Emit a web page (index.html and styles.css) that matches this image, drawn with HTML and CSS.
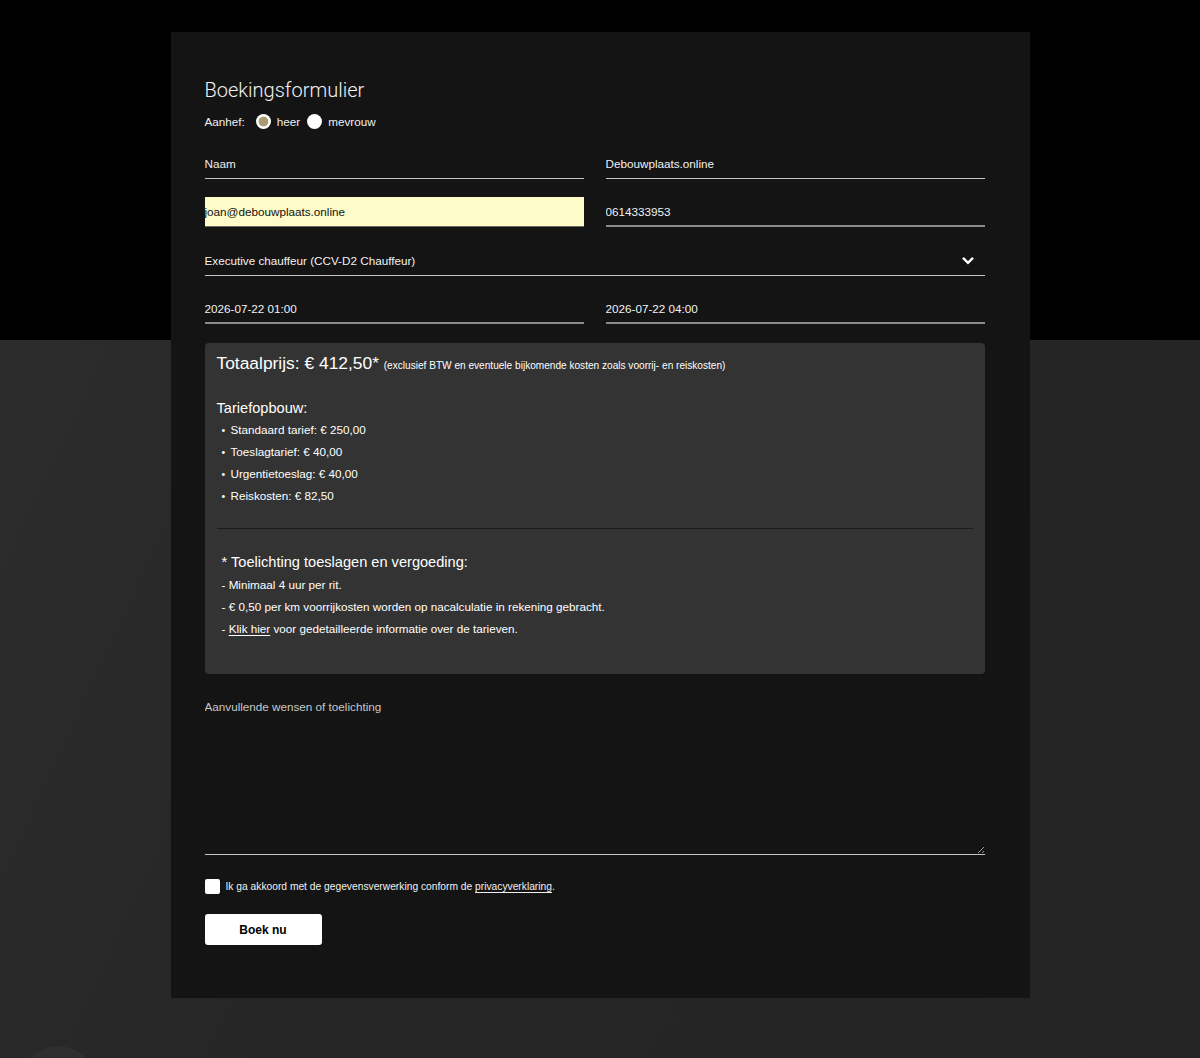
FILE: index.html
```html
<!DOCTYPE html>
<html lang="nl">
<head>
<meta charset="utf-8">
<title>Boekingsformulier</title>
<link rel="stylesheet" href="styles.css">
</head>
<body>
<div class="deco"><div class="deco-circle"></div></div>
<main class="card">
  <h1 class="title">Boekingsformulier</h1>
  <div class="salutation">
    <span class="salutation-label">Aanhef:</span>
    <label class="radio-label"><input type="radio" name="aanhef" class="radio" checked> heer</label>
    <label class="radio-label"><input type="radio" name="aanhef" class="radio"> mevrouw</label>
  </div>
  <div class="fields">
    <input class="field" type="text" placeholder="Naam">
    <input class="field" type="text" value="Debouwplaats.online">
    <input class="field autofill" type="email" value="joan@debouwplaats.online">
    <input class="field thick" type="tel" value="0614333953">
    <div class="select-wrap">
      <select class="field select">
        <option>Executive chauffeur (CCV-D2 Chauffeur)</option>
      </select>
      <svg class="chevron" width="14" height="9" viewBox="0 0 14 9"><path d="M2 1.8 L7 6.8 L12 1.8" fill="none" stroke="#fff" stroke-width="2.4"/></svg>
    </div>
    <input class="field thick" type="text" value="2026-07-22 01:00">
    <input class="field thick" type="text" value="2026-07-22 04:00">
  </div>

  <section class="price-box">
    <p class="total">Totaalprijs: € 412,50* <small class="excl">(exclusief BTW en eventuele bijkomende kosten zoals voorrij- en reiskosten)</small></p>
    <h4 class="sub">Tariefopbouw:</h4>
    <ul class="rates">
      <li>Standaard tarief: € 250,00</li>
      <li>Toeslagtarief: € 40,00</li>
      <li>Urgentietoeslag: € 40,00</li>
      <li>Reiskosten: € 82,50</li>
    </ul>
    <hr class="divider">
    <div class="notes">
      <h4 class="sub notes-title">* Toelichting toeslagen en vergoeding:</h4>
      <p class="note">- Minimaal 4 uur per rit.</p>
      <p class="note">- € 0,50 per km voorrijkosten worden op nacalculatie in rekening gebracht.</p>
      <p class="note">- <a href="#" class="link">Klik hier</a> voor gedetailleerde informatie over de tarieven.</p>
    </div>
  </section>

  <textarea class="wishes" placeholder="Aanvullende wensen of toelichting"></textarea>

  <label class="consent">
    <input type="checkbox" class="checkbox">
    <span>Ik ga akkoord met de gegevensverwerking conform de <a href="#" class="link">privacyverklaring</a>.</span>
  </label>

  <button class="submit" type="button">Boek nu</button>
</main>
</body>
</html>
```

FILE: styles.css
```css
html {
  background: #262626;
  overflow: hidden;
}
body {
  margin: 0;
  height: 1058px;
  position: relative;
  overflow: hidden;
  font-family: "Liberation Sans", Arial, sans-serif;
  font-size: 11.7px;
  color: #fff;
  background:
    linear-gradient(to bottom, #000 0, #000 340px, transparent 340px),
    linear-gradient(115deg, #2e2e2e 0%, #262626 45%, #242424 100%);
  padding-top: 32px;
  box-sizing: border-box;
}
.deco {
  position: absolute;
  left: 19px;
  bottom: 0;
  width: 78px;
  height: 12px;
  overflow: hidden;
}
.deco-circle {
  width: 78px;
  height: 78px;
  border-radius: 50%;
  background: #2f2f2f;
}
.card {
  width: 859px;
  margin: 0 auto;
  box-sizing: border-box;
  background: #141414;
  padding: 45px 45px 53px 34px;
  position: relative;
}
.title {
  margin: 0;
  font-family: Roboto, "Liberation Sans", sans-serif;
  font-weight: 300;
  font-size: 20px;
  line-height: 24px;
  color: #f2f2f2;
  position: relative;
  top: 1px;
}
.salutation {
  margin-top: 13px;
  display: flex;
  align-items: center;
  height: 15px;
  gap: 7px;
  color: #f0f0f0;
}
.salutation-label {
  margin-right: 4px;
}
.radio-label {
  display: flex;
  align-items: center;
  gap: 6px;
}
.radio {
  appearance: none;
  -webkit-appearance: none;
  margin: 0;
  width: 15px;
  height: 15px;
  border-radius: 50%;
  background: #fff;
}
.radio:checked {
  background: radial-gradient(circle, #a89a72 0, #a89a72 4.6px, #fff 5.2px);
}
.fields {
  margin-top: 20px;
  display: grid;
  grid-template-columns: 1fr 1fr;
  column-gap: 22px;
  row-gap: 18.4px;
}
.field {
  appearance: none;
  -webkit-appearance: none;
  box-sizing: border-box;
  height: 30px;
  margin: 0;
  padding: 0;
  border: 0;
  border-bottom: 1px solid #c4c4c4;
  background: transparent;
  color: #f2f2f2;
  font-family: "Liberation Sans", Arial, sans-serif;
  font-size: 11.7px;
  outline: none;
  border-radius: 0;
  width: 100%;
}
.field::placeholder {
  color: #ececec;
  opacity: 1;
}
.field.thick {
  border-bottom: 2px solid #8a8a8a;
}
.field.autofill {
  background: #fdfbc8;
  color: #111;
  border-bottom: 1px solid #6a6a62;
}
.select-wrap {
  grid-column: 1 / -1;
  position: relative;
}
.select {
  cursor: pointer;
}
.select option {
  color: #000;
}
.chevron {
  position: absolute;
  right: 10px;
  top: 10px;
  pointer-events: none;
}
.price-box {
  margin-top: 19px;
  background: #333333;
  border-radius: 4px;
  padding: 10px 12px 34px 12px;
}
.total {
  margin: 0;
  font-size: 17.4px;
  line-height: 20px;
  color: #fff;
}
.excl {
  font-size: 10.1px;
}
.sub {
  margin: 23px 0 2px;
  font-size: 14.6px;
  line-height: 18px;
  font-weight: normal;
  color: #fff;
}
.rates {
  margin: 0;
  padding-left: 5px;
  list-style: none;
}
.rates li {
  height: 22px;
  line-height: 22px;
}
.rates li::before {
  content: "\2022";
  display: inline-block;
  width: 9px;
  font-size: 10.5px;
  line-height: 0;
}
.divider {
  margin: 21px 0 0;
  border: 0;
  border-top: 1px solid #1c1c1c;
  height: 0;
}
.notes {
  padding-left: 5px;
}
.notes-title {
  margin: 24px 0 3px;
}
.note {
  margin: 0;
  line-height: 22px;
}
.link {
  color: inherit;
  text-decoration: underline;
  text-underline-offset: 2px;
}
.wishes {
  display: block;
  box-sizing: border-box;
  width: 100%;
  height: 160px;
  margin-top: 21px;
  padding: 5px 0 0;
  background: transparent;
  border: 0;
  border-bottom: 1px solid #c4c4c4;
  color: #eee;
  font-family: "Liberation Sans", Arial, sans-serif;
  font-size: 11.7px;
  line-height: 14px;
  outline: none;
  resize: vertical;
}
.wishes::placeholder {
  color: #c8c8c8;
  opacity: 1;
}
.consent {
  margin-top: 24px;
  display: flex;
  align-items: center;
  gap: 6px;
  font-size: 10.25px;
  color: #f0f0f0;
}
.checkbox {
  appearance: none;
  -webkit-appearance: none;
  margin: 0;
  width: 15px;
  height: 15px;
  background: #fff;
  border-radius: 2px;
}
.submit {
  display: block;
  margin-top: 20px;
  width: 117px;
  height: 31px;
  border: 0;
  border-radius: 3px;
  background: #fff;
  color: #000;
  font-family: "Liberation Sans", Arial, sans-serif;
  font-weight: bold;
  font-size: 12px;
  cursor: pointer;
}
```
